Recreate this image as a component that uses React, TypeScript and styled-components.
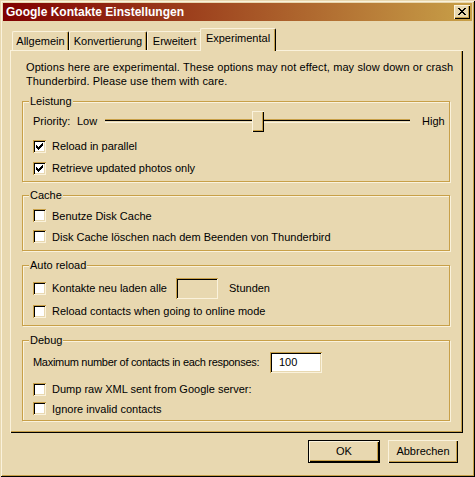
import React from "react";
import styled, { createGlobalStyle } from "styled-components";

const C = {
  face: "#E8D8B0",
  hi: "#FAF2DC",
  sh: "#C8A048",
  dk: "#000000",
  white: "#FFFFFF",
};

const Global = createGlobalStyle`
  html, body { margin: 0; padding: 0; background: ${C.face}; }
  body {
    font-family: "Liberation Sans", Arial, sans-serif;
    font-size: 11px;
    line-height: 14px;
    color: #000;
  }
  * { box-sizing: border-box; }
`;

const raised = `
  box-shadow: inset 1px 1px 0 ${C.hi}, inset -1px -1px 0 ${C.dk}, inset -2px -2px 0 ${C.sh};
`;
const sunken = `
  box-shadow: inset 1px 1px 0 ${C.sh}, inset -1px -1px 0 ${C.hi}, inset 2px 2px 0 ${C.dk}, inset -2px -2px 0 ${C.face};
`;

const Window = styled.div`
  width: 475px;
  height: 477px;
  background: ${C.face};
  padding: 3px;
  display: flex;
  flex-direction: column;
  box-shadow: inset 1px 1px 0 ${C.face}, inset -1px -1px 0 ${C.dk},
    inset 2px 2px 0 ${C.hi}, inset -2px -2px 0 ${C.sh};
`;

const TitleBar = styled.div`
  height: 18px;
  display: flex;
  align-items: center;
  justify-content: space-between;
  padding: 0 2px 0 3px;
  background: linear-gradient(to right, #800000, #C8A048);
  color: #fff;
  font-weight: bold;
  font-size: 12px;
`;

const CloseBtn = styled.div`
  width: 16px;
  height: 14px;
  background: ${C.face};
  ${raised}
  display: flex;
  align-items: center;
  justify-content: center;
  padding: 0 1px 1px 0;
`;

const Body = styled.div`
  flex: 1;
  display: flex;
  flex-direction: column;
  padding: 7px 0 0 7px;
`;

const TabRow = styled.div`
  height: 22px;
  display: flex;
  align-items: flex-end;
  padding-left: 2px;
  position: relative;
  z-index: 1;
`;

const Tab = styled.div<{ $w: number; $active?: boolean }>`
  width: ${(p) => p.$w}px;
  height: ${(p) => (p.$active ? 23 : 19)}px;
  margin: ${(p) => (p.$active ? "0 -2px -1px -2px" : "0")};
  position: relative;
  z-index: ${(p) => (p.$active ? 2 : 1)};
  background: ${C.face};
  border-top: 1px solid ${C.hi};
  border-left: 1px solid ${C.hi};
  border-right: 1px solid ${C.dk};
  border-radius: 2px 2px 0 0;
  box-shadow: inset -1px 0 0 ${C.sh};
  padding-top: 2px;
  text-align: center;
  white-space: nowrap;
`;

const Panel = styled.div`
  width: 453px;
  height: 383px;
  background: ${C.face};
  ${raised}
  padding: 10px 13px 0 12px;
  display: flex;
  flex-direction: column;
`;

const Intro = styled.p`
  margin: 0 0 0 4px;
  letter-spacing: 0.1px;
  white-space: nowrap;
`;

const Group = styled.div<{ $mt: number; $pb: number }>`
  margin-top: ${(p) => p.$mt}px;
  border: 1px solid ${C.sh};
  box-shadow: inset 1px 1px 0 ${C.hi}, 1px 1px 0 ${C.hi};
  padding: 0 0 ${(p) => p.$pb}px 10px;
  display: flex;
  flex-direction: column;
`;

const Caption = styled.div`
  width: fit-content;
  margin: -8px 0 0 -4px;
  padding: 0 1px;
  background: ${C.face};
  height: 14px;
`;

const Row = styled.div<{ $h: number; $mt?: number }>`
  height: ${(p) => p.$h}px;
  margin-top: ${(p) => p.$mt ?? 0}px;
  display: flex;
  align-items: center;
  white-space: nowrap;
`;

const Box = styled.div`
  width: 13px;
  height: 13px;
  flex: none;
  background: ${C.white};
  ${sunken}
  position: relative;
  padding: 3px;
  display: flex;
`;

const Label = styled.span<{ $w?: number }>`
  margin-left: 6px;
  ${(p) => (p.$w ? `width: ${p.$w}px; flex: none;` : "")}
`;

const Text = styled.span<{ $w?: number; $ml?: number; $tight?: boolean }>`
  ${(p) => (p.$w ? `width: ${p.$w}px; flex: none;` : "")}
  margin-left: ${(p) => p.$ml ?? 0}px;
  letter-spacing: ${(p) => (p.$tight ? "-0.3px" : "normal")};
`;

const Field = styled.div<{ $w: number; $white?: boolean }>`
  width: ${(p) => p.$w}px;
  height: 21px;
  flex: none;
  background: ${(p) => (p.$white ? C.white : C.face)};
  ${sunken}
  padding: 3px 0 0 9px;
`;

const Track = styled.div`
  width: 305px;
  height: 4px;
  flex: none;
  position: relative;
  box-shadow: inset 0 1px 0 ${C.sh}, inset 0 -1px 0 ${C.hi}, inset 0 2px 0 ${C.dk};
`;

const Thumb = styled.div`
  position: absolute;
  left: 147px;
  top: -8px;
  width: 12px;
  height: 21px;
  background: ${C.face};
  ${raised}
`;

const ButtonRow = styled.div`
  display: flex;
  justify-content: flex-end;
  gap: 8px;
  margin-top: 7px;
  padding-right: 14px;
`;

const Button = styled.div<{ $w: number; $default?: boolean }>`
  width: ${(p) => p.$w}px;
  height: 23px;
  background: ${C.face};
  border: ${(p) => (p.$default ? `1px solid ${C.dk}` : "none")};
  ${raised}
  display: flex;
  align-items: center;
  justify-content: center;
  padding-bottom: 1px;
`;

const Check = () => (
  <svg width="7" height="7" viewBox="0 0 7 7" shapeRendering="crispEdges">
    <path
      fill="#000"
      d="M0 2h1v3H0z M1 3h1v3H1z M2 4h1v3H2z M3 3h1v3H3z M4 2h1v3H4z M5 1h1v3H5z M6 0h1v3H6z"
    />
  </svg>
);

const CheckBox = ({ checked }: { checked?: boolean }) => (
  <Box>{checked && <Check />}</Box>
);

const CloseX = () => (
  <svg width="8" height="7" viewBox="0 0 8 7" shapeRendering="crispEdges">
    <path
      fill="#000"
      d="M0 0h2v1H0z M6 0h2v1H6z M1 1h2v1H1z M5 1h2v1H5z M2 2h4v1H2z M3 3h2v1H3z M2 4h4v1H2z M1 5h2v1H1z M5 5h2v1H5z M0 6h2v1H0z M6 6h2v1H6z"
    />
  </svg>
);

export default function App() {
  return (
    <>
      <Global />
      <Window>
        <TitleBar>
          <span>Google Kontakte Einstellungen</span>
          <CloseBtn>
            <CloseX />
          </CloseBtn>
        </TitleBar>
        <Body>
          <TabRow>
            <Tab $w={57}>Allgemein</Tab>
            <Tab $w={78}>Konvertierung</Tab>
            <Tab $w={55}>Erweitert</Tab>
            <Tab $w={76} $active>
              Experimental
            </Tab>
          </TabRow>
          <Panel>
            <Intro>
              Options here are experimental. These options may not effect, may slow down or crash
              <br />
              Thunderbird. Please use them with care.
            </Intro>

            <Group $mt={13} $pb={2}>
              <Caption>Leistung</Caption>
              <Row $h={20} $mt={3}>
                <Text $w={44}>Priority:</Text>
                <Text $w={28}>Low</Text>
                <Track>
                  <Thumb />
                </Track>
                <Text $ml={12}>High</Text>
              </Row>
              <Row $h={22} $mt={4}>
                <CheckBox checked />
                <Label>Reload in parallel</Label>
              </Row>
              <Row $h={22}>
                <CheckBox checked />
                <Label>Retrieve updated photos only</Label>
              </Row>
            </Group>

            <Group $mt={13} $pb={3}>
              <Caption>Cache</Caption>
              <Row $h={21} $mt={3}>
                <CheckBox />
                <Label>Benutze Disk Cache</Label>
              </Row>
              <Row $h={21}>
                <CheckBox />
                <Label>Disk Cache löschen nach dem Beenden von Thunderbird</Label>
              </Row>
            </Group>

            <Group $mt={14} $pb={3}>
              <Caption>Auto reload</Caption>
              <Row $h={24} $mt={4}>
                <CheckBox />
                <Label $w={124}>Kontakte neu laden alle</Label>
                <Field $w={42} />
                <Text $ml={11}>Stunden</Text>
              </Row>
              <Row $h={22}>
                <CheckBox />
                <Label>Reload contacts when going to online mode</Label>
              </Row>
            </Group>

            <Group $mt={14} $pb={2}>
              <Caption>Debug</Caption>
              <Row $h={26} $mt={2}>
                <Text $w={237} $tight>
                  Maximum number of contacts in each responses:
                </Text>
                <Field $w={52} $white>
                  100
                </Field>
              </Row>
              <Row $h={20} $mt={4}>
                <CheckBox />
                <Label>Dump raw XML sent from Google server:</Label>
              </Row>
              <Row $h={19}>
                <CheckBox />
                <Label>Ignore invalid contacts</Label>
              </Row>
            </Group>
          </Panel>
          <ButtonRow>
            <Button $w={72} $default>
              OK
            </Button>
            <Button $w={70}>Abbrechen</Button>
          </ButtonRow>
        </Body>
      </Window>
    </>
  );
}
